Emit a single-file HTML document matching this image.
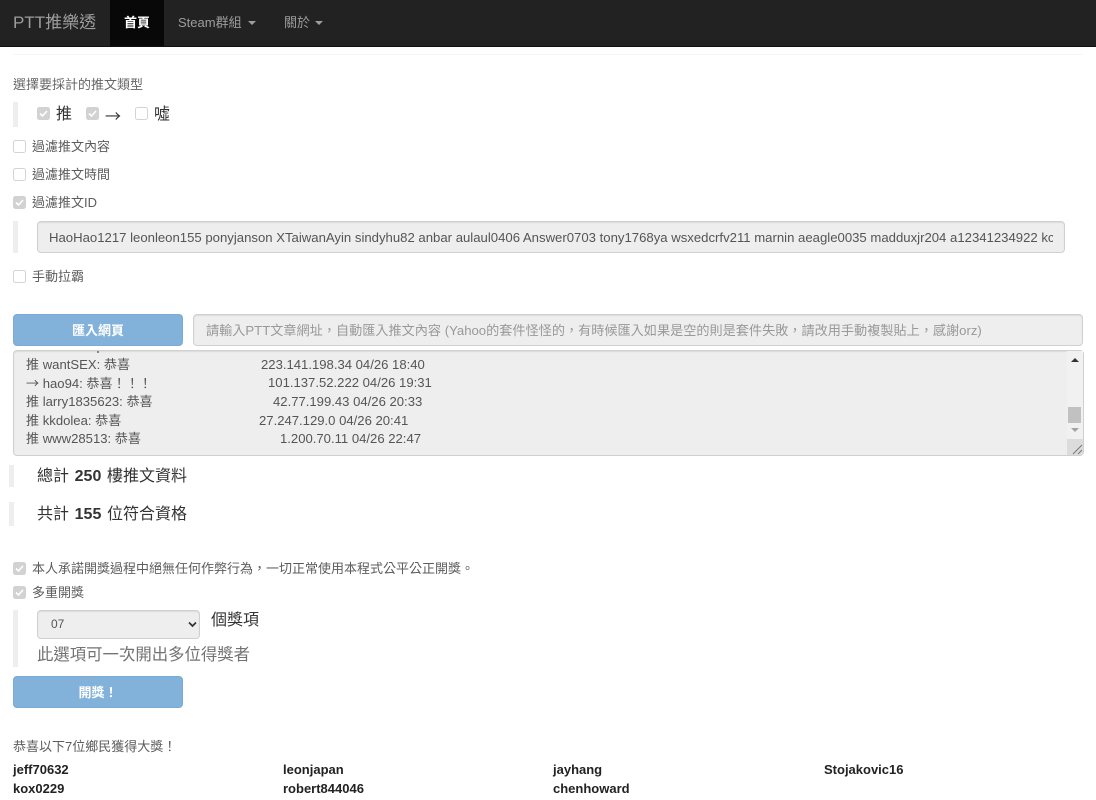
<!DOCTYPE html>
<html lang="zh-Hant"><head><meta charset="utf-8"><title>PTT推樂透</title>
<style>
html,body{margin:0;padding:0;background:#fff;width:1096px;height:800px;overflow:hidden}
body{font-family:"Liberation Sans","Noto Sans CJK TC",sans-serif;color:#333;font-size:13px;position:relative}
.t{position:absolute;white-space:pre;line-height:20px}
.bar{position:absolute;left:13px;width:5px;background:#eee}
.box{position:absolute;box-sizing:border-box;background:#eee;border:1px solid #d0d0d0;border-radius:4px;box-shadow:inset 0 1px 1px rgba(0,0,0,.075);overflow:hidden}
.cb{position:absolute;width:13px;height:13px;box-sizing:border-box;border-radius:2.5px;background:#fff;border:1px solid #d4d4d4}
.cb.on{background:#d2d2d2;border-color:#d2d2d2}
.cb.on svg{position:absolute;left:0;top:0;width:11px;height:11px}
.btn{position:absolute;left:13px;width:170px;height:32px;box-sizing:border-box;background:#82b1da;border:1px solid #7aabd6;border-radius:4px;color:#fff;text-align:center;line-height:32px;font-size:13px;font-weight:bold}
.w{position:absolute;font-weight:bold;font-size:13px;line-height:18px;color:#222;white-space:pre}
.nav{position:absolute;left:0;top:0;width:1096px;height:46px;background:#222;border-bottom:1px solid #111}
.row{position:absolute;left:26px;font-size:13.1px;line-height:18px;white-space:pre;color:#555}
.row span{position:absolute;top:0;white-space:pre}
.lb{font-size:13px;color:#5c5c5c}
.ar{font-family:"Noto Sans CJK TC",sans-serif}
.st{font-size:16px;word-spacing:1.2px}
</style></head><body>
<div class="nav"></div>
<div class="t" style="left:13px;top:13px;font-size:17px;color:#9d9d9d;line-height:20px">PTT推樂透</div>
<div style="position:absolute;left:110px;top:0;width:54px;height:46px;background:#080808"></div>
<div class="t" style="left:124px;top:13px;color:#fff;font-weight:bold">首頁</div>
<div class="t" style="left:178px;top:13px;color:#9d9d9d">Steam群組</div>
<div style="position:absolute;left:248px;top:21px;border-top:4px solid #9d9d9d;border-left:4px solid transparent;border-right:4px solid transparent"></div>
<div class="t" style="left:284px;top:13px;color:#9d9d9d">關於</div>
<div style="position:absolute;left:315px;top:21px;border-top:4px solid #9d9d9d;border-left:4px solid transparent;border-right:4px solid transparent"></div>

<div style="position:absolute;left:13px;top:54px;width:1070px;height:1px;background:#f6f6f6"></div>
<div class="t lb" style="left:13px;top:75px;color:#666">選擇要採計的推文類型</div>
<div class="bar" style="top:102px;height:25px"></div>
<div class="cb on" style="left:37px;top:107px"><svg viewBox="0 0 11 11"><path d="M2 5.5l2.5 2.5L9 3" fill="none" stroke="#fff" stroke-width="1.6"/></svg></div>
<div class="t" style="left:56px;top:105px;font-size:16px">推</div>
<div class="cb on" style="left:86px;top:107px"><svg viewBox="0 0 11 11"><path d="M2 5.5l2.5 2.5L9 3" fill="none" stroke="#fff" stroke-width="1.6"/></svg></div>
<div class="t ar" style="left:105px;top:105px;font-size:16px">→</div>
<div class="cb" style="left:135px;top:107px"></div>
<div class="t" style="left:154px;top:105px;font-size:16px">噓</div>

<div class="cb" style="left:13px;top:140px"></div>
<div class="t lb" style="left:32px;top:137px">過濾推文內容</div>
<div class="cb" style="left:13px;top:168px"></div>
<div class="t lb" style="left:32px;top:165px">過濾推文時間</div>
<div class="cb on" style="left:13px;top:196px"><svg viewBox="0 0 11 11"><path d="M2 5.5l2.5 2.5L9 3" fill="none" stroke="#fff" stroke-width="1.6"/></svg></div>
<div class="t lb" style="left:32px;top:193px">過濾推文ID</div>
<div class="bar" style="top:221px;height:32px"></div>
<div class="box" style="left:37px;top:221px;width:1028px;height:32px">
<div class="t" style="left:11px;top:6px;width:1004px;overflow:hidden;font-size:13.15px;color:#555">HaoHao1217 leonleon155 ponyjanson XTaiwanAyin sindyhu82 anbar aulaul0406 Answer0703 tony1768ya wsxedcrfv211 marnin aeagle0035 madduxjr204 a12341234922 kc</div></div>
<div class="cb" style="left:13px;top:270px"></div>
<div class="t lb" style="left:32px;top:267px">手動拉霸</div>

<div class="btn" style="top:314px">匯入網頁</div>
<div class="box" style="left:193px;top:314px;width:890px;height:32px">
<div class="t" style="left:12px;top:6px;font-size:13.15px;color:#999">請輸入PTT文章網址，自動匯入推文內容 (Yahoo的套件怪怪的，有時候匯入如果是空的則是套件失敗，請改用手動複製貼上，感謝orz)</div></div>

<div class="box" style="left:13px;top:350px;width:1071px;height:106px"></div>
<div style="position:absolute;left:97px;top:351px;width:2px;height:2px;background:#888"></div>
<div class="row" style="top:356px"><span style="left:0">推 wantSEX: 恭喜</span><span style="left:235px">223.141.198.34 04/26 18:40</span></div>
<div class="row" style="top:374px"><span style="left:0"><span class="ar" style="position:static">→</span> hao94: 恭喜！！！</span><span style="left:242px">101.137.52.222 04/26 19:31</span></div>
<div class="row" style="top:393px"><span style="left:0">推 larry1835623: 恭喜</span><span style="left:247px">42.77.199.43 04/26 20:33</span></div>
<div class="row" style="top:412px"><span style="left:0">推 kkdolea: 恭喜</span><span style="left:233px">27.247.129.0 04/26 20:41</span></div>
<div class="row" style="top:430px"><span style="left:0">推 www28513: 恭喜</span><span style="left:254px">1.200.70.11 04/26 22:47</span></div>
<div style="position:absolute;left:1067px;top:351px;width:16px;height:104px;background:#f1f1f1"></div>
<div style="position:absolute;left:1071px;top:358px;border-bottom:4px solid #333;border-left:4px solid transparent;border-right:4px solid transparent"></div>
<div style="position:absolute;left:1071px;top:428px;border-top:4px solid #a3a3a3;border-left:4px solid transparent;border-right:4px solid transparent"></div>
<div style="position:absolute;left:1068px;top:407px;width:13px;height:16px;background:#c1c1c1"></div>
<div style="position:absolute;left:1067px;top:439px;width:16px;height:16px;background:#dcdcdc"></div>
<svg style="position:absolute;left:1072px;top:444px" width="11" height="11" viewBox="0 0 11 11"><path d="M1 10L10 1M6 10L10 6" stroke="#777" stroke-width="1" fill="none"/></svg>

<div class="bar" style="left:9px;top:465px;height:22px"></div>
<div class="t st" style="left:37px;top:467px">總計 <b>250</b> 樓推文資料</div>
<div class="bar" style="left:9px;top:502px;height:24px"></div>
<div class="t st" style="left:37px;top:505px">共計 <b>155</b> 位符合資格</div>

<div class="cb on" style="left:13px;top:562px"><svg viewBox="0 0 11 11"><path d="M2 5.5l2.5 2.5L9 3" fill="none" stroke="#fff" stroke-width="1.6"/></svg></div>
<div class="t lb" style="left:32px;top:559px">本人承諾開獎過程中絕無任何作弊行為，一切正常使用本程式公平公正開獎。</div>
<div class="cb on" style="left:13px;top:586px"><svg viewBox="0 0 11 11"><path d="M2 5.5l2.5 2.5L9 3" fill="none" stroke="#fff" stroke-width="1.6"/></svg></div>
<div class="t lb" style="left:32px;top:583px">多重開獎</div>
<div class="bar" style="top:610px;height:57px"></div>
<div class="box" style="left:37px;top:610px;width:163px;height:29px"><div class="t" style="left:13px;top:3px;font-size:12px;color:#555">07</div>
<svg style="position:absolute;left:150px;top:10px" width="9" height="7" viewBox="0 0 9 7"><path d="M1 1.5l3.5 3.5L8 1.5" fill="none" stroke="#333" stroke-width="1.7"/></svg></div>
<div class="t" style="left:211px;top:611px;font-size:16px">個獎項</div>
<div class="t" style="left:37px;top:645px;font-size:16.4px;color:#737373">此選項可一次開出多位得獎者</div>
<div class="btn" style="top:676px">開獎！</div>

<div class="t lb" style="left:13px;top:737px">恭喜以下7位鄉民獲得大獎！</div>
<div class="w" style="left:13px;top:761px">jeff70632</div>
<div class="w" style="left:283px;top:761px">leonjapan</div>
<div class="w" style="left:553px;top:761px">jayhang</div>
<div class="w" style="left:824px;top:761px">Stojakovic16</div>
<div class="w" style="left:13px;top:780px">kox0229</div>
<div class="w" style="left:283px;top:780px">robert844046</div>
<div class="w" style="left:553px;top:780px">chenhoward</div>
</body></html>
